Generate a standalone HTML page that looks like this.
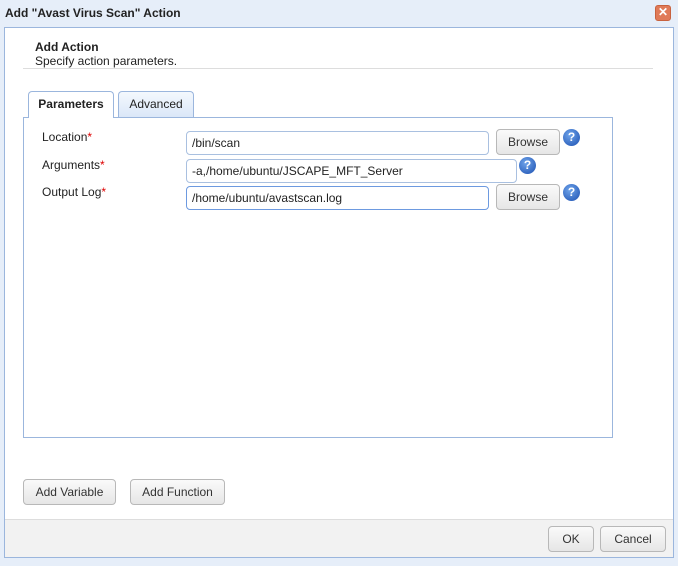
<!DOCTYPE html>
<html><head><style>
*{box-sizing:border-box}
body{margin:0;width:678px;height:566px;background:#e6eef9;font-family:"Liberation Sans",sans-serif;font-size:12px;color:#222;position:relative;overflow:hidden}
.a{position:absolute}
.title{left:5px;top:6px;font-weight:bold;font-size:12px;color:#222}
.close{left:655px;top:5px;width:16px;height:16px;background:#e07a58;border:1px solid #c8623f;border-radius:3px;color:#fff;font-weight:bold;font-size:12px;line-height:13px;text-align:center}
.panel{left:4px;top:27px;width:670px;height:531px;background:#fff;border:1px solid #9bb6dd}
.footer{left:5px;top:519px;width:668px;height:38px;background:#f2f2f2;border-top:1px solid #ddd}
.btn{background:linear-gradient(#fafafa,#e6e6e6);border:1px solid #b8b8b8;border-radius:4px;text-align:center;color:#333;font-size:12px}
.inp{background:#fff;border:1px solid #a9c0e0;border-radius:4px;padding-left:5px;font-size:12px;line-height:22px;color:#222}
.help{width:17px;height:17px;border-radius:50%;background:radial-gradient(circle at 40% 35%,#6fa4ea,#1b4fb0);color:#fff;font-weight:bold;font-size:12px;line-height:17px;text-align:center}
.lbl{font-size:12px}
.lbl span{color:#d00}
</style></head><body>
<div class="a title">Add "Avast Virus Scan" Action</div>
<div class="a close">✕</div>
<div class="a panel"></div>
<div class="a" style="left:35px;top:40px;font-weight:bold">Add Action</div>
<div class="a" style="left:35px;top:54px">Specify action parameters.</div>
<div class="a" style="left:23px;top:68px;width:630px;height:1px;background:#ddd"></div>
<div class="a" style="left:23px;top:117px;width:590px;height:321px;border:1px solid #9bb6dd"></div>
<div class="a" style="left:28px;top:91px;width:86px;height:27px;background:#fff;border:1px solid #9bb6dd;border-bottom:none;border-radius:4px 4px 0 0;text-align:center;line-height:25px;font-weight:bold">Parameters</div>
<div class="a" style="left:118px;top:91px;width:76px;height:26px;background:linear-gradient(#f4f8fd,#dbe7f8);border:1px solid #9bb6dd;border-bottom:none;border-radius:4px 4px 0 0;text-align:center;line-height:25px">Advanced</div>
<div class="a lbl" style="left:42px;top:130px">Location<span>*</span></div>
<div class="a lbl" style="left:42px;top:158px">Arguments<span>*</span></div>
<div class="a lbl" style="left:42px;top:185px">Output Log<span>*</span></div>
<div class="a inp" style="left:186px;top:131px;width:303px;height:24px">/bin/scan</div>
<div class="a btn" style="left:496px;top:129px;width:64px;height:26px;line-height:24px">Browse</div>
<div class="a help" style="left:563px;top:129px">?</div>
<div class="a inp" style="left:186px;top:159px;width:331px;height:24px">-a,/home/ubuntu/JSCAPE_MFT_Server</div>
<div class="a help" style="left:519px;top:157px">?</div>
<div class="a inp" style="left:186px;top:186px;width:303px;height:24px;border-color:#6d9ae0">/home/ubuntu/avastscan.log</div>
<div class="a btn" style="left:496px;top:184px;width:64px;height:26px;line-height:24px">Browse</div>
<div class="a help" style="left:563px;top:184px">?</div>
<div class="a btn" style="left:23px;top:479px;width:93px;height:26px;line-height:24px">Add Variable</div>
<div class="a btn" style="left:130px;top:479px;width:95px;height:26px;line-height:24px">Add Function</div>
<div class="a footer"></div>
<div class="a btn" style="left:548px;top:526px;width:46px;height:26px;line-height:24px">OK</div>
<div class="a btn" style="left:600px;top:526px;width:66px;height:26px;line-height:24px">Cancel</div>
</body></html>
